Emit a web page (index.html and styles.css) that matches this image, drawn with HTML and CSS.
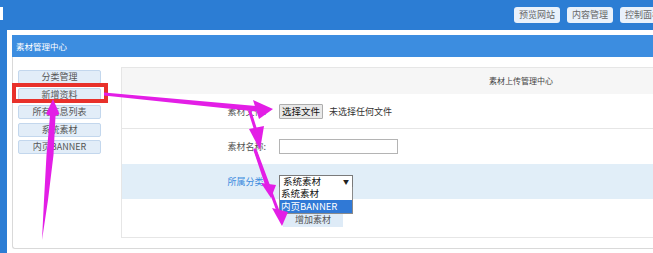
FILE: index.html
```html
<!DOCTYPE html>
<html lang="zh-CN">
<head>
<meta charset="utf-8">
<title>素材管理中心</title>
<link rel="stylesheet" href="styles.css">
</head>
<body>
<div class="topbar">
  <div class="logo-frag"></div>
  <div class="top-btns">
    <span class="top-btn">预览网站</span>
    <span class="top-btn">内容管理</span>
    <span class="top-btn">控制面板</span>
  </div>
</div>
<div class="page">
  <div class="panel-head">素材管理中心</div>
  <div class="panel-body">
    <div class="sidebar">
      <div class="side-btn">分类管理</div>
      <div class="side-btn">新增资料</div>
      <div class="side-btn">所有信息列表</div>
      <div class="side-btn">系统素材</div>
      <div class="side-btn">内页BANNER</div>
    </div>
    <div class="main">
      <div class="main-head">素材上传管理中心</div>
      <div class="row row-line">
        <div class="label">素材文件:</div>
        <div class="value"><span class="file-btn">选择文件</span><span class="file-text">未选择任何文件</span></div>
      </div>
      <div class="row">
        <div class="label">素材名称:</div>
        <div class="value"><span class="text-input"></span></div>
      </div>
      <div class="row row-blue">
        <div class="label label-blue">所属分类:</div>
        <div class="value">
          <div class="select">
            <span class="select-text">系统素材</span><span class="select-caret">▼</span>
            <div class="options">
              <div class="option">系统素材</div>
              <div class="option option-active">内页BANNER</div>
            </div>
          </div>
        </div>
      </div>
      <div class="row row-last">
        <div class="label"></div>
        <div class="value"><span class="add-btn">增加素材</span></div>
      </div>
    </div>
  </div>
</div>
<div class="red-box"></div>
<svg class="arrows" width="653" height="253" viewBox="0 0 653 253">
  <g fill="#e31ee6" stroke="none">
    <polygon points="104,92.5 104,95.5 256,111.5 256,106"/>
    <polygon points="253,100 273,109 259,119"/>
    <polygon points="249,129 264,126 260,150"/>
    <polygon points="261,183 276,185 271,198"/>
    <polygon points="272,208 288,212 282,226"/>
    <polygon points="53,99 59.5,114 55.5,116 53.5,155 48,200 42,240 44,200 46.5,155 50,116 46,114"/>
  </g>
  <g stroke="#e31ee6" stroke-width="3" stroke-linecap="round">
    <line x1="250" y1="112" x2="256" y2="131"/>
    <line x1="255" y1="150" x2="267" y2="186"/>
    <line x1="256" y1="152" x2="278" y2="211"/>
  </g>
</svg>
</body>
</html>
```

FILE: styles.css
```css
* { box-sizing: border-box; }
html, body {
  margin: 0;
  padding: 0;
  width: 653px;
  height: 253px;
  overflow: hidden;
  background: #2c7dd4;
  font-family: "Noto Sans CJK SC", "Noto Sans", sans-serif;
  position: relative;
}
.topbar {
  height: 30px;
  display: flex;
  justify-content: space-between;
  align-items: flex-start;
}
.logo-frag {
  width: 3px;
  height: 13px;
  margin-top: 7px;
  background: #ffffff;
}
.top-btns {
  display: flex;
  gap: 7px;
  margin-top: 7px;
  margin-right: -13px;
}
.top-btn {
  width: 46px;
  height: 16px;
  line-height: 16px;
  text-align: center;
  font-size: 9px;
  color: #666;
  background: #e9f1fb;
  border-radius: 3px;
}
.page {
  margin-left: 7px;
  height: 223px;
  background: #ffffff;
  padding: 5px 0 0 5px;
}
.panel-head {
  height: 22px;
  line-height: 22px;
  background: #3c8de0;
  color: #ffffff;
  font-size: 8.5px;
  padding-left: 4px;
}
.panel-body {
  height: 192px;
  display: flex;
  border-left: 1px solid #d9d9d9;
  border-bottom: 1px solid #d9d9d9;
  border-bottom-left-radius: 3px;
}
.sidebar {
  width: 108px;
  flex: none;
  padding: 13px 0 0 5px;
  display: flex;
  flex-direction: column;
  gap: 3.5px;
}
.side-btn {
  width: 83px;
  height: 14px;
  line-height: 12px;
  text-align: center;
  font-size: 9px;
  color: #555;
  background: #e2edf8;
  border: 1px solid #c3d7ed;
  border-radius: 2px;
}
.main {
  flex: none;
  width: 800px;
  height: 171px;
  margin-top: 10px;
  border: 1px solid #e6e6e6;
  display: flex;
  flex-direction: column;
}
.main-head {
  height: 26px;
  line-height: 26px;
  text-align: center;
  font-size: 8px;
  color: #444;
  background: #f6f6f6;
}
.row {
  height: 35px;
  display: flex;
  align-items: center;
}
.row-line { border-bottom: 1px solid #e6e6e6; }
.row-blue { background: #e1eef8; }
.row-last { flex: 1; }
.label {
  width: 150px;
  flex: none;
  text-align: right;
  padding-right: 6px;
  font-size: 9px;
  color: #555;
}
.label-blue { color: #3a8ade; }
.value {
  padding-left: 7px;
  display: flex;
  align-items: center;
}
.file-btn {
  width: 44px;
  height: 15px;
  line-height: 13px;
  text-align: center;
  font-size: 9.5px;
  color: #111;
  background: #e9e9e9;
  border: 1px solid #adadad;
  border-radius: 1px;
}
.file-text {
  margin-left: 6px;
  font-size: 9px;
  color: #333;
}
.text-input {
  display: block;
  width: 119px;
  height: 15px;
  border: 1px solid #b4b4b4;
  background: #fff;
}
.select {
  position: relative;
  width: 74px;
  height: 13px;
  border: 1px solid #7a7a7a;
  background: #fff;
  display: flex;
  justify-content: space-between;
  align-items: center;
  padding: 0 3px;
}
.select-text {
  font-size: 9.5px;
  line-height: 11px;
  color: #111;
}
.select-caret {
  font-size: 6px;
  line-height: 6px;
  color: #222;
}
.options {
  position: absolute;
  top: 100%;
  left: -1px;
  width: 74px;
  background: #fff;
  border: 1px solid #8a8a8a;
  border-top: none;
  z-index: 5;
}
.option {
  height: 13px;
  line-height: 13px;
  font-size: 9.5px;
  color: #111;
  padding-left: 1px;
}
.option-active {
  background: #3079d6;
  color: #ffffff;
}
.add-btn {
  margin-left: 4px;
  margin-top: 2px;
  width: 60px;
  height: 15px;
  line-height: 15px;
  text-align: center;
  font-size: 9px;
  color: #555;
  background: #deebf7;
}
.red-box {
  position: absolute;
  left: 12px;
  top: 83px;
  width: 96px;
  height: 20px;
  border: 4px solid #e8312b;
  z-index: 9;
}
.arrows {
  position: absolute;
  left: 0;
  top: 0;
  z-index: 10;
  pointer-events: none;
}
```
